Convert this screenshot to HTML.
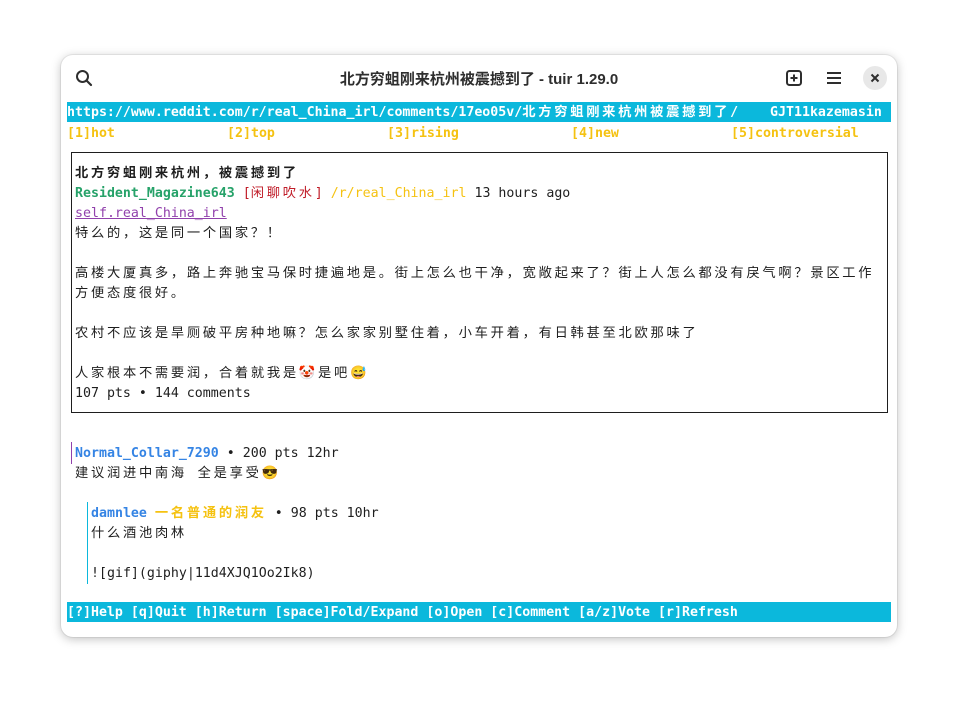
<!DOCTYPE html>
<html><head><meta charset="utf-8"><style>
*{margin:0;padding:0;box-sizing:border-box}
body{width:958px;height:704px;background:#fff;position:relative;overflow:hidden;font-family:"DejaVu Sans Mono","Noto Sans CJK SC",monospace;font-size:13.28px;color:#1e1e1e}
.win{position:absolute;left:61px;top:55px;width:836px;height:582px;background:#fff;border-radius:12px;box-shadow:0 2px 10px rgba(0,0,0,.25),0 0 0 1px rgba(0,0,0,.06)}
.title{position:absolute;left:0;right:0;top:13px;text-align:center;font-family:"Liberation Sans","Noto Sans CJK SC",sans-serif;font-weight:bold;font-size:15px;color:#2e2e2e}
.l{position:absolute;white-space:pre;line-height:20px;height:20px}
.c{letter-spacing:2.72px}
.b{font-weight:bold}
.y{color:#f5c211}
</style></head><body>
<div class="win">
<svg style="position:absolute;left:14px;top:14px" width="18" height="18" viewBox="0 0 18 18"><circle cx="7.5" cy="7.5" r="5.5" fill="none" stroke="#2e2e2e" stroke-width="2"/><path d="M11.5 11.5L16 16" stroke="#2e2e2e" stroke-width="2.2" stroke-linecap="round"/></svg>
<div class="title">北方穷蛆刚来杭州被震撼到了 - tuir 1.29.0</div>
<svg style="position:absolute;left:724px;top:14px" width="18" height="18" viewBox="0 0 18 18"><rect x="2" y="2" width="14" height="14" rx="2.5" fill="none" stroke="#2e2e2e" stroke-width="2"/><path d="M9 5.5v7M5.5 9h7" stroke="#2e2e2e" stroke-width="2"/></svg>
<svg style="position:absolute;left:764px;top:14px" width="18" height="18" viewBox="0 0 18 18"><path d="M2 4h14M2 9h14M2 14h14" stroke="#2e2e2e" stroke-width="2"/></svg>
<div style="position:absolute;left:802px;top:11px;width:24px;height:24px;border-radius:50%;background:#e8e8e8"></div>
<svg style="position:absolute;left:808px;top:17px" width="12" height="12" viewBox="0 0 12 12"><path d="M2.5 2.5l7 7M9.5 2.5l-7 7" stroke="#2e2e2e" stroke-width="2"/></svg>
</div>
<div style="position:absolute;left:67px;top:102px;width:824px;height:20px;background:#0bb8dc"></div>
<div class="l b" style="left:67px;top:103px;color:#fff">https://www.reddit.com/r/real_China_irl/comments/17eo05v/<span class="c">北方穷蛆刚来杭州被震撼到了</span>/    GJT11kazemasin</div>
<div class="l b y" style="left:67px;top:124px">[1]hot</div>
<div class="l b y" style="left:227px;top:124px">[2]top</div>
<div class="l b y" style="left:387px;top:124px">[3]rising</div>
<div class="l b y" style="left:571px;top:124px">[4]new</div>
<div class="l b y" style="left:731px;top:124px">[5]controversial</div>
<div style="position:absolute;left:71px;top:152px;width:817px;height:261px;border:1px solid #1e1e1e"></div>
<div class="l b c" style="left:75px;top:164px">北方穷蛆刚来杭州，被震撼到了</div>
<div class="l" style="left:75px;top:184px"><span class="b" style="color:#26a269">Resident_Magazine643</span> <span style="color:#c01c28">[<span class="c">闲聊吹水</span>]</span> <span class="y">/r/real_China_irl</span> 13 hours ago</div>
<div class="l" style="left:75px;top:204px;color:#9141ac;text-decoration:underline">self.real_China_irl</div>
<div class="l c" style="left:75px;top:224px">特么的，这是同一个国家？！</div>
<div class="l c" style="left:75px;top:264px">高楼大厦真多，路上奔驰宝马保时捷遍地是。街上怎么也干净，宽敞起来了？街上人怎么都没有戾气啊？景区工作</div>
<div class="l c" style="left:75px;top:284px">方便态度很好。</div>
<div class="l c" style="left:75px;top:324px">农村不应该是旱厕破平房种地嘛？怎么家家别墅住着，小车开着，有日韩甚至北欧那味了</div>
<div class="l c" style="left:75px;top:364px">人家根本不需要润，合着就我是🤡是吧😅</div>
<div class="l" style="left:75px;top:384px">107 pts • 144 comments</div>
<div style="position:absolute;left:71px;top:442px;width:1px;height:22px;background:#9141ac"></div>
<div class="l" style="left:75px;top:444px"><span class="b" style="color:#3584e4">Normal_Collar_7290</span> • 200 pts 12hr</div>
<div class="l c" style="left:75px;top:464px">建议润进中南海 全是享受😎</div>
<div style="position:absolute;left:87px;top:502px;width:1px;height:82px;background:#0bb8dc"></div>
<div class="l" style="left:91px;top:504px"><span class="b" style="color:#3584e4">damnlee</span> <span class="b y c">一名普通的润友</span> • 98 pts 10hr</div>
<div class="l c" style="left:91px;top:524px">什么酒池肉林</div>
<div class="l" style="left:91px;top:564px">![gif](giphy|11d4XJQ1Oo2Ik8)</div>
<div style="position:absolute;left:67px;top:602px;width:824px;height:20px;background:#0bb8dc"></div>
<div class="l b" style="left:67px;top:603px;color:#fff">[?]Help [q]Quit [h]Return [space]Fold/Expand [o]Open [c]Comment [a/z]Vote [r]Refresh</div>
</body></html>
